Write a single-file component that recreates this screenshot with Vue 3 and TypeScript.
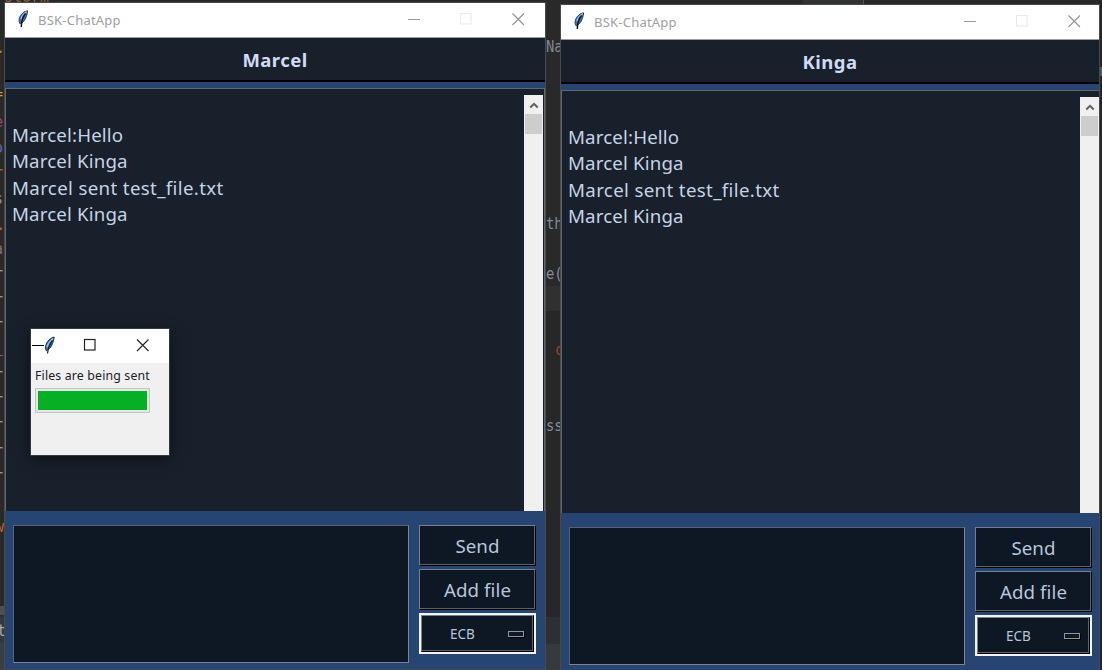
<script setup lang="ts">
interface Message {
  text: string
  wide?: boolean
}

interface ChatWindow {
  id: string
  name: string
  messages: Message[]
}

interface CodeFragment {
  text: string
  x: number
  y: number
  color: string
}

const messages: Message[] = [
  { text: 'Marcel:Hello' },
  { text: 'Marcel Kinga' },
  { text: 'Marcel sent test_file.txt', wide: true },
  { text: 'Marcel Kinga' },
]

const windows: ChatWindow[] = [
  { id: 'left', name: 'Marcel', messages },
  { id: 'right', name: 'Kinga', messages },
]

const leftGutter: CodeFragment[] = [
  { text: '.', x: -4, y: 39, color: '#a9803f' },
  { text: '=', x: -6, y: 85, color: '#d09c48' },
  { text: 'e', x: -6, y: 113, color: '#8b4c83' },
  { text: 'o', x: -6, y: 139, color: '#5a6bb5' },
  { text: 'r', x: -6, y: 164, color: '#b8672e' },
  { text: 's', x: -6, y: 190, color: '#8a9199' },
  { text: '.', x: -4, y: 216, color: '#b8672e' },
  { text: 'a', x: -6, y: 240, color: '#7d7368' },
  { text: 'r', x: -6, y: 265, color: '#9a9da0' },
  { text: 'r', x: -6, y: 291, color: '#9a9da0' },
  { text: 'r', x: -6, y: 316, color: '#9a9da0' },
  { text: '_', x: -6, y: 338, color: '#9a9da0' },
  { text: 'r', x: -6, y: 366, color: '#9a9da0' },
  { text: 'r', x: -6, y: 391, color: '#9a9da0' },
  { text: 'r', x: -6, y: 416, color: '#9a9da0' },
  { text: 'r', x: -6, y: 442, color: '#9a9da0' },
  { text: 'r', x: -6, y: 467, color: '#9a9da0' },
  { text: 'w', x: -5, y: 518, color: '#c4602d' },
  { text: 't', x: -3, y: 622, color: '#a9adb1' },
]

const middleGutter: CodeFragment[] = [
  { text: 'Na', x: 1, y: 38, color: '#808890' },
  { text: 'th', x: 1, y: 215, color: '#808d99' },
  { text: 'e(', x: 1, y: 265, color: '#808d99' },
  { text: 'c', x: 10, y: 341, color: '#a04628' },
  { text: 'ss', x: 1, y: 417, color: '#808d99' },
]
</script>

<template>
  <main class="desktop">
    <div class="editor-top">
      <span class="top-word">storm</span>
      <span class="top-tab"><span>2</span></span>
    </div>
    <div class="gutter gutter-left">
      <span
        v-for="f in leftGutter"
        :key="f.y"
        class="code"
        :style="{ left: f.x + 'px', top: f.y + 'px', color: f.color }"
      >{{ f.text }}</span>
    </div>
    <div class="gutter gutter-middle">
      <span
        v-for="f in middleGutter"
        :key="f.y"
        class="code"
        :style="{ left: f.x + 'px', top: f.y + 'px', color: f.color }"
      >{{ f.text }}</span>
    </div>
    <div class="gutter gutter-right"><span class="code right-code">n</span></div>

    <section v-for="w in windows" :key="w.id" class="window" :class="w.id">
      <div class="titlebar">
        <svg class="feather" viewBox="0 0 12 19">
          <path d="M10.600 1.800C7 2.300 3.400 5.300 2.300 9.600c-.5 2.200-.2 4 .9 5.300 2.200-.7 5-3.700 6.200-7.500C10.100 5.300 10.600 3.500 10.600 1.800Z" fill="#3975b7" stroke="#26313e" stroke-width=".9" />
          <path d="M9.700 2.600C6.700 4.600 4.700 7.200 3.800 10.200" stroke="#91c2ee" stroke-width="1.300" fill="none" />
          <path d="M8.500 4.500C5.800 7.500 4.500 11 4.300 18" stroke="#111" stroke-width="1.400" fill="none" />
        </svg>
        <span class="caption">BSK-ChatApp</span>
        <svg class="controls" viewBox="0 0 120 14">
          <path d="M0 7.500h12" stroke="#999" />
          <rect x="52.500" y="1.500" width="10.500" height="10.500" fill="none" stroke="#e9e9e9" />
          <path d="M104.500 1.500l11.500 11.500M116 1.500l-11.500 11.500" stroke="#929292" stroke-width="1.100" />
        </svg>
      </div>
      <header class="name"><span>{{ w.name }}</span></header>
      <div class="stripe"></div>
      <div class="log">
        <div class="messages">
          <p v-for="(m, i) in w.messages" :key="i" :class="{ wide: m.wide }"><span>{{ m.text }}</span></p>
        </div>
        <div class="scroll">
          <div class="arrow">
            <svg viewBox="0 0 10 8"><path d="M1.300 6.500 5 2.800 8.700 6.500" fill="none" stroke="#606060" stroke-width="2" /></svg>
          </div>
          <div class="thumb"></div>
        </div>
      </div>
      <footer class="composer">
        <div class="entry"></div>
        <div class="actions">
          <button class="btn"><span>Send</span></button>
          <button class="btn"><span>Add file</span></button>
          <div class="mode">
            <div class="mode-face"><span>ECB</span><i></i></div>
          </div>
        </div>
      </footer>
    </section>

    <aside class="dialog">
      <div class="dialog-bar">
        <svg class="dialog-icons" viewBox="0 0 138 34">
          <path d="M1 16.500h12" stroke="#000" />
          <path d="M23.200 8C19 9 15.700 12.500 14.700 16.500c-.5 2-.3 4 .7 5.300 2.300-1 4.800-3.500 6-7C22.500 12 23 10 23.200 8Z" fill="#3975b7" stroke="#26313e" stroke-width="1" />
          <path d="M22 9.500C19 12 17 14.500 16 18" stroke="#91c2ee" stroke-width="1.500" fill="none" />
          <path d="M21.500 11.500C18.500 15 17.200 19 16.500 24.500" stroke="#222" stroke-width="1.200" fill="none" />
          <rect x="53.500" y="10.500" width="10.500" height="10.500" fill="none" stroke="#222" stroke-width="1.200" />
          <path d="M106 10.500l11.500 11.500M117.500 10.500 106 22" stroke="#222" stroke-width="1.100" />
        </svg>
      </div>
      <div class="dialog-body">
        <p><span>Files are being sent</span></p>
        <div class="progress"><div></div></div>
      </div>
    </aside>
  </main>
</template>

<style>
body {
  margin: 0;
  overflow: hidden;
}
</style>

<style scoped>
* {
  box-sizing: border-box;
}
.desktop {
  position: relative;
  width: 1102px;
  height: 670px;
  overflow: hidden;
  background: #292929;
  font-family: "Noto Sans", "Open Sans", sans-serif;
}
.desktop span {
  white-space: pre;
}
.editor-top {
  position: absolute;
  left: 0;
  top: 0;
  width: 1102px;
  height: 5px;
  overflow: hidden;
}
.top-word {
  position: absolute;
  left: 4px;
  top: -11px;
  font: 15px/16px "DejaVu Sans Mono", monospace;
  color: #8f6238;
}
.top-tab {
  position: absolute;
  left: 803px;
  top: 0;
  width: 61px;
  height: 5px;
  background: #303234;
  border-right: 1px solid #555;
}
.top-tab span {
  position: absolute;
  left: 7px;
  top: -10px;
  font: 12px/13px "DejaVu Sans Mono", monospace;
  color: #70757a;
}
.gutter {
  position: absolute;
  top: 0;
  height: 670px;
  overflow: hidden;
}
.gutter-left {
  left: 0;
  width: 5px;
  background: linear-gradient(#292929 606px, #4c4e50 606px 615px, #2d2f30 615px 617px, #35383a 617px 643px, #3b3e40 643px);
}
.gutter-middle {
  left: 545px;
  width: 16px;
  background: linear-gradient(#292929 286px, #303030 286px 311px, #272727 311px 617px, #2e2f30 617px 644px, #363a3b 644px);
}
.gutter-right {
  left: 1099px;
  width: 3px;
  background: #252525;
}
.code {
  position: absolute;
  font: 15px/18px "DejaVu Sans Mono", monospace;
}
.gutter-middle .code {
  transform: scaleX(0.92);
  transform-origin: left;
}
.right-code {
  top: 62px;
  left: 0;
  color: #657380;
}
.window {
  position: absolute;
  display: flex;
  flex-direction: column;
  height: 667px;
  background: #264573;
  box-shadow: 0 0 0 1px #484a4b;
}
.left {
  left: 5px;
  top: 3px;
  width: 540px;
}
.right {
  left: 561px;
  top: 5px;
  width: 538px;
}
.left.window {
  height: 666px;
}
.titlebar {
  display: flex;
  flex: none;
  height: 35px;
  background: #fff;
  border-bottom: 1px solid #9a9da0;
}
.feather {
  width: 12px;
  height: 19px;
  margin: 6px 0 0 12px;
}
.caption {
  margin: 7px 0 0 9px;
  width: 84px;
  font-size: 13px;
  line-height: 20px;
  letter-spacing: 0.22px;
  color: #a0a0a0;
}
.controls {
  width: 120px;
  height: 14px;
  margin: 9px 0 0 286px;
  flex: none;
}
.name {
  flex: none;
  height: 44px;
  background: #18202b;
  border-bottom: 2px solid #000;
  text-align: center;
  font-size: 18.5px;
  font-weight: 700;
  line-height: 43px;
  letter-spacing: 0.45px;
  color: #d0dcf5;
}
.stripe {
  flex: none;
  height: 6px;
  background: #264573;
}
.log {
  display: flex;
  flex: none;
  height: 423px;
  border: 1px solid #62676c;
  border-bottom: 0;
  background: #18202b;
}
.right .log {
  border-right: 0;
}
.left .scroll {
  margin-right: 1px;
}
.messages {
  flex: 1;
  padding: 33px 0 0 6px;
}
p {
  margin: 0;
}
.messages p {
  height: 26.4px;
  font-size: 18.7px;
  line-height: 26.4px;
  letter-spacing: 0.15px;
  color: #c7d3e6;
}
.messages p.wide {
  letter-spacing: 0.35px;
}
.scroll {
  width: 19px;
  height: 416px;
  margin-top: 6px;
  background: #f0f0f0;
}
.arrow {
  display: flex;
  justify-content: center;
  align-items: center;
  height: 19px;
}
.arrow svg {
  width: 10px;
  height: 8px;
}
.thumb {
  height: 20px;
  margin: 0 1px;
  background: #cdcdcd;
}
.composer {
  display: flex;
  flex: none;
  padding: 14px 0 0 8px;
}
.entry {
  width: 396px;
  height: 138px;
  background: #0e1724;
  border: 1px solid #59616c;
  border-bottom-color: #7c8591;
  border-right-color: #7c8591;
}
.actions {
  width: 117px;
  margin-left: 10px;
}
.btn {
  display: flex;
  justify-content: center;
  align-items: center;
  width: 117px;
  height: 41px;
  margin: 0 0 3px;
  padding: 0;
  background: #0e1724;
  border: 1px solid #76808c;
  border-right-color: #000;
  border-bottom-color: #000;
  box-shadow: inset -1px -1px #59616b;
  font-family: inherit;
  font-size: 18.7px;
  letter-spacing: 0.1px;
  color: #b8c6da;
}
.mode {
  width: 117px;
  height: 41px;
  padding: 2px;
  background: #f4f5f5;
}
.mode-face {
  display: flex;
  align-items: center;
  height: 37px;
  border: 1px solid #76808c;
  border-right-color: #000;
  border-bottom-color: #000;
  box-shadow: inset -1px -1px #59616b;
  background: #0e1724;
  color: #b8c6da;
  font-size: 13.5px;
}
.mode-face span {
  width: 29px;
  margin-left: 28px;
}
.mode-face i {
  width: 16px;
  height: 6px;
  margin-left: 29px;
  border: 1px solid #8c969f;
  box-shadow: 1px 1px #000;
}
.dialog {
  position: absolute;
  left: 31px;
  top: 329px;
  width: 138px;
  height: 126px;
  background: #f0f0f0;
  box-shadow: 0 0 0 1px #303b42, 0 3px 14px #0009;
}
.dialog-bar {
  height: 34px;
  background: #fff;
}
.dialog-icons {
  display: block;
  width: 138px;
  height: 34px;
}
.dialog-body {
  padding: 4px 4px 0;
}
.dialog-body p {
  height: 21px;
  font-size: 12.3px;
  line-height: 18px;
  letter-spacing: 0.17px;
  color: #201b28;
}
.progress {
  width: 115px;
  height: 25px;
  padding: 2px;
  border: 1px solid #c4c4c4;
  background: #e6e6e6;
}
.progress div {
  width: 109px;
  height: 19px;
  background: #06b025;
}
</style>
